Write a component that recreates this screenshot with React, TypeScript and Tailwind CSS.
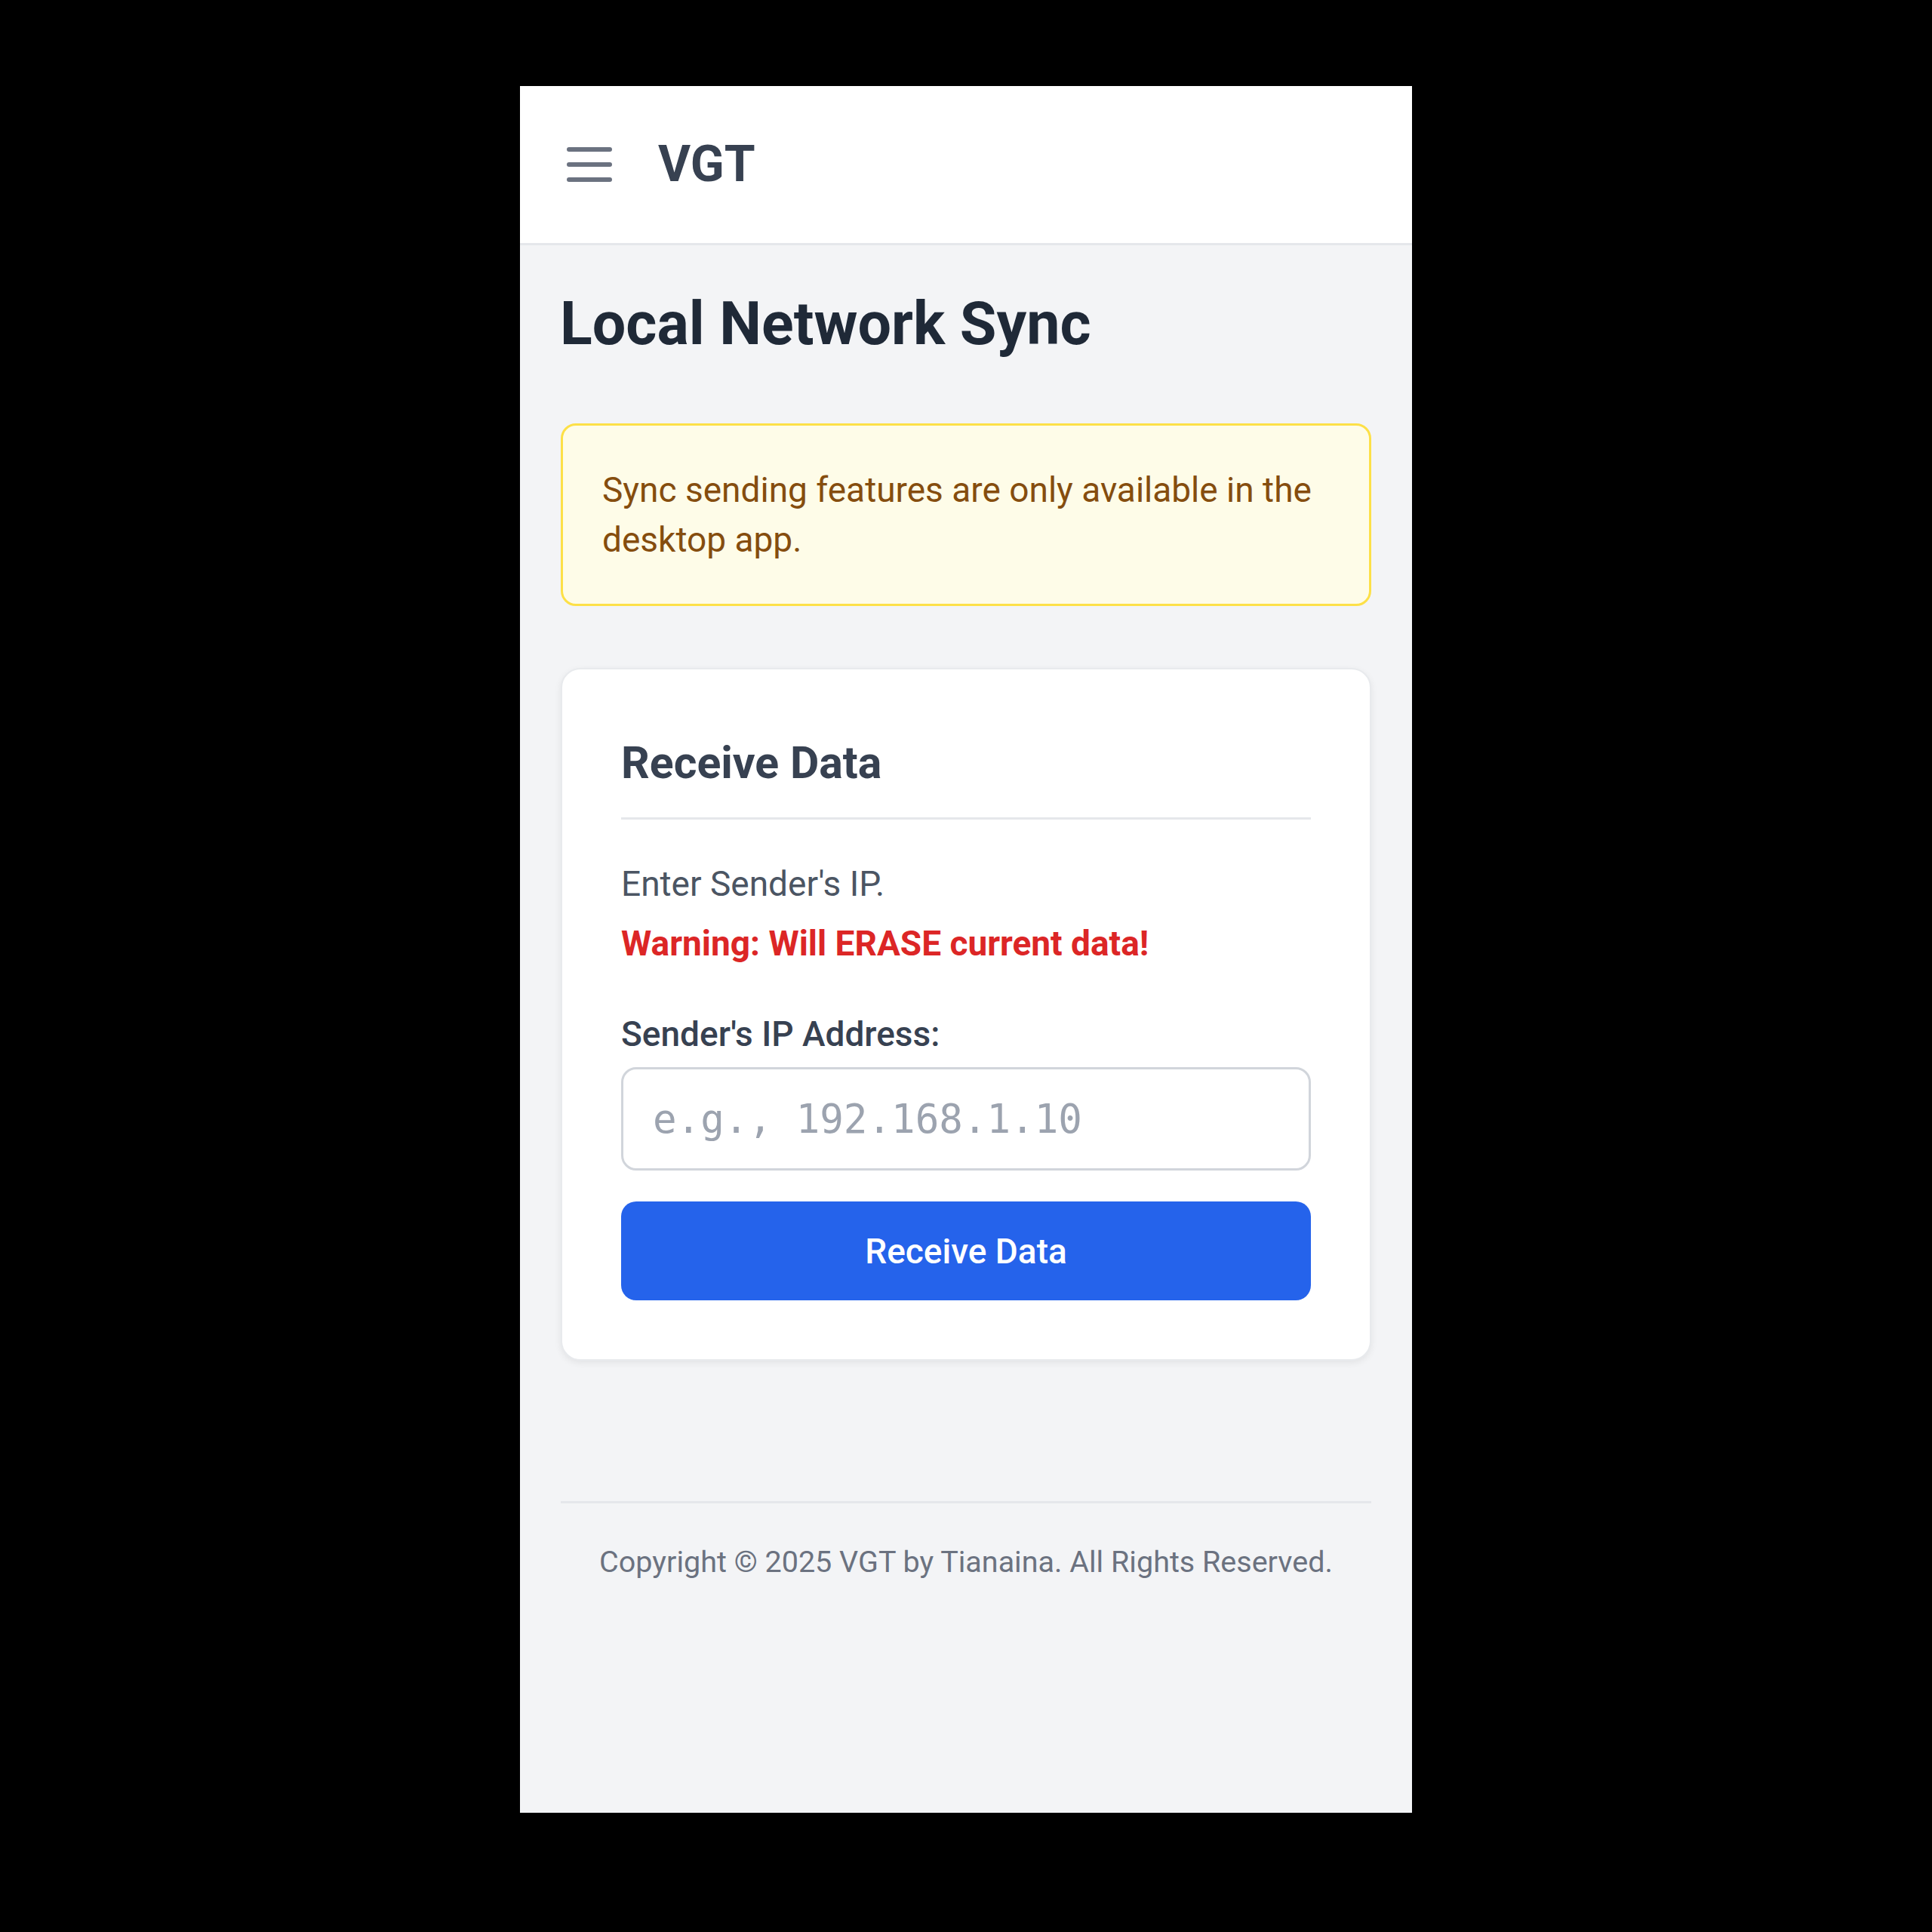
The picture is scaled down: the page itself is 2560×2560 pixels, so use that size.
import React from "react";

function Hamburger() {
  return (
    <svg width="60" height="46" viewBox="0 0 60 46" fill="none" aria-hidden="true">
      <line x1="3" y1="3" x2="57" y2="3" stroke="#6b7280" strokeWidth="6" strokeLinecap="round" />
      <line x1="3" y1="23" x2="57" y2="23" stroke="#6b7280" strokeWidth="6" strokeLinecap="round" />
      <line x1="3" y1="43" x2="57" y2="43" stroke="#6b7280" strokeWidth="6" strokeLinecap="round" />
    </svg>
  );
}

export default function App() {
  return (
    <div className="w-[2560px] h-[2560px] bg-black pt-[114px] flex justify-center" style={{ fontFamily: "Roboto, 'Noto Sans', Arial, sans-serif" }}>
      <div className="w-[1182px] h-[2288px] bg-[#f3f4f6] flex flex-col overflow-hidden">
        <header className="h-[211px] shrink-0 bg-white border-b-[3px] border-[#e5e7eb] flex items-center pl-[62px] gap-[61px]">
          <Hamburger />
          <span className="text-[66px] leading-[92px] font-bold text-[#374151]">VGT</span>
        </header>

        <main className="px-[54px] pt-[52px] flex flex-col">
          <h1 className="text-[79px] leading-[105px] font-bold text-[#1f2937] -ml-[1px]">Local Network Sync</h1>

          <div className="mt-[79px] border-[3px] border-[#fde047] bg-[#fefce8] rounded-[20px] p-[52px]">
            <p className="text-[46px] leading-[66px] text-[#854d0e]">
              Sync sending features are only available in the desktop app.
            </p>
          </div>

          <section className="mt-[82px] bg-white rounded-[26px] border-[2px] border-[#e8eaed] shadow-[0_3px_10px_rgba(0,0,0,0.07)] px-[78px] pt-[78px] pb-[78px]">
            <h2 className="text-[59px] leading-[92px] font-bold text-[#374151] pb-[26px] border-b-[3px] border-[#e5e7eb]">
              Receive Data
            </h2>
            <p className="mt-[52px] text-[46px] leading-[66px] text-[#4b5563]">Enter Sender's IP.</p>
            <p className="mt-[13px] text-[46px] leading-[66px] font-bold text-[#dc2626]">Warning: Will ERASE current data!</p>

            <label className="block mt-[54px] mb-[11px] text-[46px] leading-[66px] font-medium text-[#374151]">
              Sender's IP Address:
            </label>
            <input
              type="text"
              placeholder="e.g., 192.168.1.10"
              className="block w-full h-[137px] border-[3px] border-[#d1d5db] rounded-[20px] px-[39px] text-[52.5px] bg-white text-[#111827] placeholder:text-[#9ca3af] outline-none"
              style={{ fontFamily: "'DejaVu Sans Mono', 'Liberation Mono', monospace" }}
            />
            <button className="mt-[41px] w-full h-[131px] bg-[#2563eb] rounded-[20px] text-white text-[46px] leading-[66px] font-medium flex items-center justify-center">
              Receive Data
            </button>
          </section>

          <footer className="mt-[186px] border-t-[3px] border-[#e5e7eb] pt-[52px] text-center">
            <p className="text-[39.5px] leading-[52px] text-[#6b7280]">
              Copyright © 2025 VGT by Tianaina. All Rights Reserved.
            </p>
          </footer>
        </main>
      </div>
    </div>
  );
}
